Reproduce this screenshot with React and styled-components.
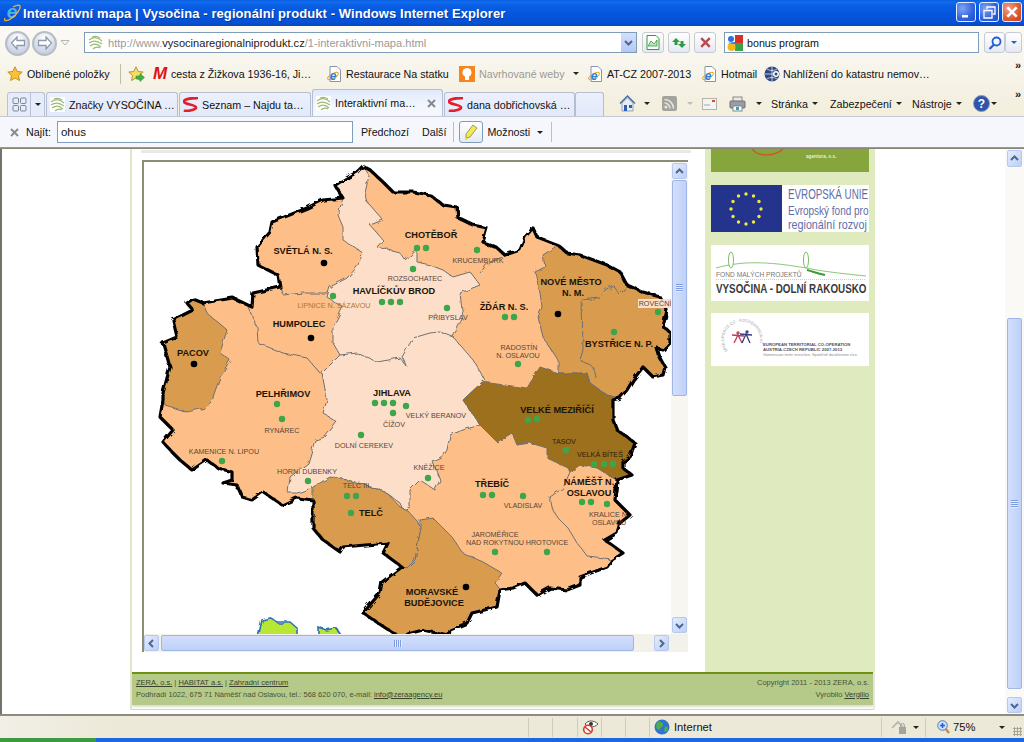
import React from 'react'
import styled, { createGlobalStyle } from 'styled-components'

const GlobalStyle = createGlobalStyle`
    html, body {
        margin: 0;
        padding: 0;
        background: #fff;
        overflow: hidden;
    }
    * { box-sizing: border-box; }
    svg { flex: none; }
`

const Window = styled.div`
    width: 1024px;
    height: 742px;
    display: flex;
    flex-direction: column;
    overflow: hidden;
    font-family: 'Liberation Sans', sans-serif;
    font-size: 10.7px;
    color: #111;
`

const TitleBar = styled.div`
    height: 26px;
    flex: none;
    display: flex;
    align-items: center;
    padding: 0 2px 0 3px;
    background: linear-gradient(180deg, #0a5be0 0%, #0f6dee 8%, #0a5fe4 20%, #0655dc 55%, #0551d8 85%, #0a49b8 100%);
`

const TitleText = styled.span`
    margin-left: 2px;
    color: #fff;
    font-weight: 700;
    font-size: 13px;
    letter-spacing: 0.08px;
    text-shadow: 1px 1px 0 #0a3a9c;
    white-space: nowrap;
`

const WinButtons = styled.div`
    margin-left: auto;
    display: flex;
    gap: 3px;
    padding-bottom: 2px;
`

const WinButton = styled.div`
    width: 20px;
    height: 20px;
    border: 1px solid #e8eefc;
    border-radius: 3px;
    display: flex;
    align-items: center;
    justify-content: center;
    background: ${p => p.$close
        ? 'radial-gradient(circle at 30% 30%, #f0a088, #dd5a30 60%, #c43c18)'
        : 'radial-gradient(circle at 30% 30%, #7ea4f4, #2f62e0 60%, #1f50cc)'};
`

const Toolbars = styled.div`
    flex: none;
    background: linear-gradient(180deg, #fbfaf5 0%, #f8f6ee 35%, #f5f1e4 70%, #f3efdc 100%);
`

const AddressRow = styled.div`
    height: 31px;
    display: flex;
    align-items: flex-start;
    padding: 6px 2px 0 5px;
`

const NavGroup = styled.div`
    width: 79px;
    height: 26px;
    margin-top: -2px;
    display: flex;
    align-items: center;
    gap: 2px;
`

const NavCircle = styled.div`
    width: 25px;
    height: 25px;
    border-radius: 50%;
    border: 2px solid #b8bcc4;
    background: radial-gradient(circle at 50% 25%, #ffffff, #d4dceb 60%, #b6c4dc);
    display: flex;
    align-items: center;
    justify-content: center;
`

const InputBox = styled.div`
    height: 21px;
    width: ${p => p.$w}px;
    margin-left: ${p => p.$ml || 0}px;
    flex: none;
    border: 1px solid #7f9db9;
    background: #fff;
    display: flex;
    align-items: center;
    padding-left: ${p => p.$pad || 3}px;
    white-space: nowrap;
    position: relative;
`

const UrlText = styled.span`
    margin-left: 5px;
    font-size: 11.1px;
`

const UrlHost = styled.span`
    color: #222;
`

const UrlDim = styled.span`
    color: #9a9a9a;
`

const UrlDrop = styled.div`
    margin-left: auto;
    width: 15px;
    height: 19px;
    background: linear-gradient(180deg, #d4e0fb, #b4c8f6);
    display: flex;
    align-items: center;
    justify-content: center;
`

const SearchText = styled.span`
    margin-left: 4px;
`

const ToolButton = styled.div`
    width: ${p => p.$w || 22}px;
    height: 21px;
    flex: none;
    margin-left: ${p => p.$ml || 0}px;
    border: 1px solid #c6cbd6;
    border-radius: 3px;
    background: linear-gradient(180deg, #ffffff, #e6e9f2);
    display: flex;
    align-items: center;
    justify-content: center;
`

const FavRow = styled.div`
    height: 33px;
    display: flex;
    align-items: center;
    padding: 0 0 0 7px;
    position: relative;
`

const FavItem = styled.div`
    width: ${p => p.$w}px;
    flex: none;
    display: flex;
    align-items: center;
    gap: ${p => p.$gap || 4}px;
    white-space: nowrap;
    color: ${p => (p.$dim ? '#9b9b94' : '#111')};
`

const FavSeparator = styled.div`
    width: 8px;
    height: 20px;
    flex: none;
    border-left: 1px solid #c3bca4;
`

const More = styled.span`
    position: absolute;
    right: 3px;
    top: ${p => p.$top}px;
    font-size: 11px;
    font-weight: 700;
    line-height: 10px;
    color: #222;
`

const TabRow = styled.div`
    height: 26px;
    display: flex;
    align-items: flex-end;
    padding-left: 7px;
    position: relative;
`

const QuickTabs = styled.div`
    width: 38px;
    height: 24px;
    margin-right: 1px;
    border: 1px solid #b9c2d6;
    border-bottom: none;
    border-radius: 3px 3px 0 0;
    background: #e6ecfa;
    display: flex;
    align-items: center;
`

const QuickCell = styled.div`
    width: ${p => p.$w}px;
    height: 100%;
    display: flex;
    align-items: center;
    justify-content: center;
    border-right: ${p => (p.$line ? '1px solid #b9c2d6' : 'none')};
`

const Tab = styled.div`
    width: ${p => p.$w || 132}px;
    height: ${p => (p.$active ? 27 : 24)}px;
    flex: none;
    margin-right: ${p => (p.$last ? 0 : 1)}px;
    padding: 0 3px;
    display: flex;
    align-items: center;
    gap: 4px;
    border: 1px solid #b4bed2;
    border-bottom: none;
    border-radius: 3px 3px 0 0;
    background: ${p => (p.$active
        ? 'linear-gradient(180deg, #dfe8fb, #f3f6fe 60%, #f6f7fd)'
        : 'linear-gradient(180deg, #ecf0fc, #e2e9fa)')};
    white-space: nowrap;
    color: #111;
`

const TabClose = styled.span`
    margin-left: auto;
    padding-right: 3px;
    display: flex;
    align-items: center;
`

const CommandBar = styled.div`
    margin-left: 15px;
    height: 25px;
    display: flex;
    align-items: center;
`

const Cmd = styled.div`
    width: ${p => p.$w}px;
    flex: none;
    display: flex;
    align-items: center;
    gap: ${p => p.$gap || 4}px;
    white-space: nowrap;
`

const Caret = styled.span`
    width: 0;
    height: 0;
    flex: none;
    margin-left: ${p => p.$ml || 0}px;
    border-left: 3px solid transparent;
    border-right: 3px solid transparent;
    border-top: 3px solid ${p => (p.$dim ? '#bdbdb4' : p.$color || '#222')};
`

const FindBar = styled.div`
    height: 31px;
    flex: none;
    display: flex;
    align-items: center;
    padding-left: 10px;
    background: #f6f6fd;
    border-top: 1px solid #c4c9d8;
`

const FindLabel = styled.span`
    margin-left: ${p => p.$ml}px;
    white-space: nowrap;
`

const FindInput = styled(InputBox)`
    height: 22px;
    font-size: 11.5px;
`

const FindSeparator = styled.div`
    width: 1px;
    height: 20px;
    flex: none;
    margin-left: ${p => p.$ml}px;
    background: #c7c0a8;
`

const HighlightButton = styled(ToolButton)`
    height: 22px;
    border-color: #7f9db9;
    border-radius: 3px;
`

const Divider = styled.div`
    height: 2px;
    flex: none;
    background: linear-gradient(180deg, #a5a294, #7f7c6e);
`

const Viewport = styled.div`
    height: 565px;
    flex: none;
    display: flex;
    background: #fff;
    border-left: 2px solid #75736a;
    overflow: hidden;
`

const PageArea = styled.div`
    width: 1003px;
    flex: none;
    padding-left: 128px;
`

const Sheet = styled.div`
    width: 745px;
    border-left: 2px solid #dfe5cb;
    border-right: 2px solid #e9e9e2;
    display: flex;
    flex-direction: column;
`

const SheetBody = styled.div`
    height: 523px;
    display: flex;
`

const MainColumn = styled.div`
    width: 573px;
    flex: none;
    padding: 1px 0 0 10px;
`

const TopStrip = styled.div`
    width: 550px;
    height: 3px;
    margin-left: -1px;
    background: #e8e8e8;
`

const MapFrame = styled.div`
    margin-top: 7px;
    width: 546px;
    height: 492px;
    display: flex;
    flex-direction: column;
    border-top: 2px solid #8d8c78;
    border-left: 2px solid #8d8c78;
    background: #f3f2ea;
`

const MapRow = styled.div`
    height: 472px;
    flex: none;
    display: flex;
`

const MapBox = styled.div`
    width: 527px;
    height: 472px;
    flex: none;
    background: #fff;
    overflow: hidden;
`

const VTrack = styled.div`
    width: ${p => p.$w}px;
    flex: none;
    display: flex;
    flex-direction: column;
    align-items: center;
    justify-content: space-between;
    padding: 1px 0;
    background: #f7f6f0;
`

const VTrackTop = styled.div`
    display: flex;
    flex-direction: column;
`

const HTrack = styled.div`
    height: 18px;
    flex: none;
    display: flex;
    align-items: center;
`

const ScrollButton = styled.div`
    width: ${p => p.$w || 15}px;
    height: ${p => p.$h || 16}px;
    flex: none;
    margin-left: ${p => p.$ml || 0}px;
    margin-top: ${p => p.$mt || 0}px;
    border: 1px solid #b5c8ee;
    border-radius: 2px;
    background: linear-gradient(135deg, #e4ecfd, #bccff8);
    display: flex;
    align-items: center;
    justify-content: center;
`

const VThumb = styled.div`
    width: 15px;
    height: ${p => p.$h}px;
    margin-top: ${p => p.$mt}px;
    flex: none;
    border: 1px solid #9fb6e6;
    border-radius: 2px;
    background: linear-gradient(90deg, #d2defb, #bfd1f9);
    display: flex;
    align-items: center;
    justify-content: center;
`

const HThumb = styled.div`
    width: 473px;
    height: 16px;
    flex: none;
    margin-left: 2px;
    border: 1px solid #9fb6e6;
    border-radius: 2px;
    background: linear-gradient(180deg, #d2defb, #bfd1f9);
    display: flex;
    align-items: center;
    justify-content: center;
`

const Grip = styled.div`
    width: ${p => (p.$vertical ? 7 : 8)}px;
    height: ${p => (p.$vertical ? 8 : 7)}px;
    background: repeating-linear-gradient(
        ${p => (p.$vertical ? '180deg' : '90deg')},
        #7f9be0 0,
        #7f9be0 1px,
        #e6edfd 1px,
        #e6edfd 2px
    );
`

const SideColumn = styled.div`
    width: 170px;
    flex: none;
    padding-left: 6px;
    display: flex;
    flex-direction: column;
    background: #dfeabf;
`

const Logo = styled.svg`
    display: block;
    width: 158px;
    height: ${p => p.$h}px;
    margin-bottom: ${p => p.$mb}px;
    flex: none;
    background: ${p => p.$bg || '#fff'};
`

const Footer = styled.div`
    height: 33px;
    flex: none;
    display: flex;
    justify-content: space-between;
    padding: 3px 4px 0 4px;
    background: #b5ca88;
    border-top: 2px solid #6f9212;
    box-shadow: 0 2px 2px #dcdcd2;
    font-size: 7.5px;
    line-height: 11.5px;
    color: #4a5236;
`

const FooterRight = styled.div`
    text-align: right;
`

const FooterLink = styled.span`
    text-decoration: underline;
    color: #38432a;
`

const SheetEnd = styled.div`
    height: 1px;
    margin-top: 4px;
    background: #cdd8a6;
`

const PageScroll = styled.div`
    width: 19px;
    flex: none;
    display: flex;
    flex-direction: column;
    align-items: center;
    padding-top: 1px;
    background: #fbf9f5;
`

const StatusBar = styled.div`
    height: 24px;
    flex: none;
    display: flex;
    align-items: center;
    padding-left: 528px;
    border-top: 2px solid #8e8c80;
    background: linear-gradient(90deg, #f1efe6 0, #ece9d8 120px);
    position: relative;
    font-size: 11.2px;
`

const StatusCell = styled.div`
    width: ${p => p.$w}px;
    height: 19px;
    flex: none;
    display: flex;
    align-items: center;
    gap: ${p => p.$gap || 4}px;
    padding-left: ${p => p.$pad || 0}px;
    border-left: 1px solid #cfccb8;
`

const GripCorner = styled.div`
    position: absolute;
    right: 2px;
    bottom: 2px;
    width: 9px;
    height: 9px;
    background: radial-gradient(circle, #a8a595 1px, transparent 1.2px) 0 0 / 3px 3px;
`

const Taskbar = styled.div`
    height: 4px;
    flex: none;
    display: flex;
    background: #1c66e0;
`

const StartButton = styled.div`
    width: 96px;
    background: #3f9a3f;
`

const MapTitle = styled.text`
    font-family: 'Liberation Sans', sans-serif;
    font-weight: 700;
    font-size: 9.2px;
    fill: #1c1408;
    text-anchor: middle;
`

const MapSmall = styled.text`
    font-family: 'Liberation Sans', sans-serif;
    font-size: 7.2px;
    fill: ${p => p.$color || '#55463a'};
    text-anchor: middle;
`

const LogoText = styled.text`
    font-family: 'Liberation Sans', sans-serif;
    font-size: ${p => p.$size}px;
    font-weight: ${p => p.$weight || 400};
    fill: ${p => p.$color};
`

// the lettering in the logos is condensed, so it is squeezed horizontally
const Squeezed = ({ x, y, sx = 1, children, ...rest }) => (
    <LogoText transform={`translate(${x} ${y}) scale(${sx} 1)`} {...rest}>{children}</LogoText>
)

const OUTER = `363,166 370,170 383,182 393,192 413,192 430,195 443,205 457,207 458,218 473,225 487,228 483,242 497,248 505,255 520,250
525,237 533,228 537,237 558,245 567,253 580,255 607,265 620,272 627,285 643,292 660,297 667,310 663,327 670,332 670,343 663,350 657,348
660,358 665,367 663,375 653,377 643,367 633,380 627,390 620,398 613,400 613,420 617,430 627,437 635,443 630,457 623,462 623,468 632,475
617,480 615,500 630,515 620,523 617,533 605,540 623,553 612,560 607,567 580,577 580,585 567,590 550,588 537,595 525,583 513,588 500,590
497,607 472,613 467,623 450,630 449,636 423,630 400,636 393,633 363,613 380,593 382,582 402,567 383,553 388,543 343,547 340,552 323,540
313,528 313,500 297,498 282,505 263,492 252,500 242,497 237,485 223,483 232,480 232,472 218,468 207,460 192,470 180,460 172,452 163,442
173,430 160,417 163,400 163,393 170,367 163,343 177,337 173,320 193,310 187,303 193,299 203,303 233,298 252,307 253,293 280,287 278,275
258,265 257,247 270,232 272,222 307,208 323,200 343,198 335,185 357,172`

const PALE = `363,166 369,175 365,193 368,203 383,220 370,225 383,240 377,247 400,253 405,260 417,250 417,262 430,265 443,270 453,277 470,272
480,285 460,293 462,310 463,317 453,337 473,360 485,380 463,400 480,425 463,430 450,435 447,450 442,458 433,462 440,480 435,490 420,480
410,490 410,507 403,510 400,503 387,493 373,487 347,480 333,477 327,483 315,487 297,493 288,493 290,477 308,463 315,440 325,437 337,422
323,413 327,400 322,373 340,355 333,343 333,327 343,307 327,297 330,287 347,278 357,267 363,253 343,240 343,227 338,215 343,198 335,185 357,172`

const PACOV = `203,303 207,313 227,330 220,353 230,360 220,377 213,397 213,400 205,408 187,412 165,405 163,400 163,393 170,367 163,343 177,337
173,320 193,310 187,303 193,299`

const TELC = `313,487 330,477 347,480 373,487 387,493 400,507 407,510 418,522 420,533 415,560 407,568 402,567 383,553 388,543 343,547 340,552
323,540 313,528 313,500`

const BUDEJOVICE = `420,520 433,518 452,537 463,553 483,562 502,573 495,583 500,590 497,607 472,613 467,623 450,630 449,636 423,630 400,636
393,633 363,613 380,593 382,582 402,567 407,568 415,560 420,533`

const MESTO = `558,245 543,255 545,267 535,272 540,293 542,307 538,317 543,337 558,360 558,373 587,373 590,383 607,395 620,398 627,390 633,380
643,367 653,377 663,375 665,367 660,358 657,348 663,350 670,343 670,332 663,327 667,310 660,297 643,292 627,285 620,272 607,265 580,255 567,253`

const MEZIRICI = `463,400 482,382 527,388 540,367 558,373 587,373 590,383 607,395 620,398 613,400 613,420 617,430 627,437 635,443 630,457 623,462
623,468 632,475 617,480 613,478 597,468 580,465 570,472 568,468 547,458 547,448 530,443 517,445 512,433 497,442 480,425`

const INNER_LINES = [
    '340,355 357,353 377,362 400,358 407,367 402,357 413,338 430,333 440,332 453,337',
    '480,273 488,263 507,255',
    '248,307 257,327 258,343 283,353 307,358 320,373',
    '280,287 283,295 303,293 328,293',
    '570,472 563,488 550,497 552,507 557,517 568,528 577,543 588,557 597,558 612,560',
    '627,285 620,295 613,285 605,290 600,298 582,300 583,350 580,360 593,367 595,377',
]

const TITLES = [
    ['SVĚTLÁ N. S.', 303, 254],
    ['CHOTĚBOŘ', 431, 238],
    ['HAVLÍČKŮV BROD', 394, 294],
    ['ŽĎÁR N. S.', 504, 310],
    ['NOVÉ MĚSTO', 571, 285],
    ['N. M.', 573, 296],
    ['BYSTŘICE N. P.', 619, 347],
    ['HUMPOLEC', 299, 327],
    ['PACOV', 193, 356],
    ['PELHŘIMOV', 283, 397],
    ['JIHLAVA', 392, 396],
    ['VELKÉ MEZIŘÍČÍ', 557, 413],
    ['TŘEBÍČ', 492, 487],
    ['NÁMĚŠŤ N.', 589, 485],
    ['OSLAVOU', 589, 496],
    ['TELČ', 371, 516],
    ['MORAVSKÉ', 432, 595],
    ['BUDĚJOVICE', 434, 606],
]

const PLACES = [
    ['ROZSOCHATEC', 415, 281],
    ['KRUCEMBURK', 478, 263],
    ['PŘIBYSLAV', 448, 320],
    ['RADOSTÍN', 519, 350],
    ['N. OSLAVOU', 518, 358],
    ['KAMENICE N. LIPOU', 224, 454],
    ['RYNÁREC', 282, 433],
    ['ČÍŽOV', 394, 427],
    ['VELKÝ BERANOV', 436, 418],
    ['DOLNÍ CEREKEV', 364, 448],
    ['HORNÍ DUBENKY', 307, 474],
    ['TELČ III.', 357, 488],
    ['KNĚŽICE', 429, 470],
    ['VLADISLAV', 523, 508],
    ['KRALICE N.', 609, 517],
    ['OSLAVOU', 609, 525],
    ['JAROMĚŘICE', 495, 537],
    ['NAD ROKYTNOU', 495, 545],
    ['HROTOVICE', 547, 545],
]

const GREEN_DOTS = [
    [417, 248], [426, 248], [413, 269], [333, 296], [382, 302], [391, 302], [400, 302], [477, 250], [447, 308],
    [505, 317], [514, 317], [518, 364], [658, 312], [614, 332], [277, 404], [282, 419], [222, 461], [308, 481],
    [347, 496], [356, 496], [351, 513], [361, 435], [393, 413], [375, 403], [384, 403], [393, 403], [406, 406],
    [428, 478], [528, 420], [537, 419], [566, 450], [594, 464], [604, 464], [613, 464], [582, 502], [591, 502],
    [607, 504], [483, 495], [492, 495], [523, 496], [495, 552], [547, 552],
]

const BLACK_DOTS = [[324, 263], [311, 338], [194, 364], [558, 314], [466, 587]]

const RegionMap = () => (
    <svg width="527" height="472" viewBox="144 162 527 472">
        <defs>
            {/* the borders in the scan wobble, straight polygons look too clean */}
            <filter id="wobble" x="-5%" y="-5%" width="110%" height="110%">
                <feTurbulence type="fractalNoise" baseFrequency="0.13" numOctaves="2" seed="4" result="noise" />
                <feDisplacementMap in="SourceGraphic" in2="noise" scale="5" result="moved" />
                <feGaussianBlur in="moved" stdDeviation="0.45" />
            </filter>
        </defs>
        <g filter="url(#wobble)">
            <polygon points="258,638 262,620 270,618 277,622 290,622 297,628 297,638" fill="#b7e733" stroke="#2f6fb8" strokeWidth="1.6" />
            <polygon points="318,638 318,627 326,630 336,628 343,638" fill="#b7e733" stroke="#2f6fb8" strokeWidth="1.6" />
            <polygon points={OUTER} fill="#fdbf87" />
            <polygon points={PALE} fill="#fddfc9" stroke="#6f6f6f" />
            <polygon points={PACOV} fill="#d99c50" stroke="#6f6f6f" />
            <polygon points={TELC} fill="#d99c50" stroke="#6f6f6f" />
            <polygon points={BUDEJOVICE} fill="#d99c50" stroke="#6f6f6f" />
            <polygon points={MESTO} fill="#d99c50" stroke="#6f6f6f" />
            <polygon points={MEZIRICI} fill="#9c6f1a" stroke="#6f6f6f" />
            {INNER_LINES.map(line => (
                <polyline key={line} points={line} fill="none" stroke="#6f6f6f" />
            ))}
            <polygon points={OUTER} fill="none" stroke="#000" strokeWidth="3.2" strokeLinejoin="round" />
        </g>
        <rect x="638" y="299" width="33" height="9" fill="#fddfc9" />
        {TITLES.map(([text, x, y]) => (
            <MapTitle key={text + y} x={x} y={y}>{text}</MapTitle>
        ))}
        {PLACES.map(([text, x, y]) => (
            <MapSmall key={text + y} x={x} y={y}>{text}</MapSmall>
        ))}
        <MapSmall x="564" y="444" $color="#2e2010">TASOV</MapSmall>
        <MapSmall x="600" y="457" $color="#2e2010">VELKÁ BÍTEŠ</MapSmall>
        <MapSmall x="334" y="308" $color="#b0782a">LIPNICE N. SÁZAVOU</MapSmall>
        <MapSmall x="655" y="306">ROVEČNÍ</MapSmall>
        {GREEN_DOTS.map(([x, y]) => (
            <circle key={`${x}-${y}`} cx={x} cy={y} r="3.2" fill="#3da64a" />
        ))}
        {BLACK_DOTS.map(([x, y]) => (
            <circle key={`${x}-${y}`} cx={x} cy={y} r="3.3" fill="#000" />
        ))}
    </svg>
)

// small drawn icons for the browser chrome
const IeLogo = () => (
    <svg width="18" height="18" viewBox="0 0 18 18" overflow="visible">
        <text x="9" y="14" textAnchor="middle" fontFamily="Liberation Sans, sans-serif" fontWeight="700" fontStyle="italic" fontSize="19" fill="#4fb0f0">e</text>
        <path d="M2 14C0 18 5 17 9 14s9-9 8-12c-1-2-5 0-7 1" fill="none" stroke="#f2b233" strokeWidth="1.300" />
    </svg>
)

const IePage = () => (
    <svg width="15" height="16" viewBox="0 0 15 16">
        <path d="M3 .5h7l3.500 3.500v11.500H3z" fill="#fff" stroke="#8a94a8" />
        <ellipse cx="6" cy="10" rx="6" ry="2.200" fill="none" stroke="#f0a020" transform="rotate(-30 6 10)" />
        <text x="6" y="14" textAnchor="middle" fontFamily="Liberation Sans, sans-serif" fontWeight="700" fontStyle="italic" fontSize="12" fill="#2a7fd8">e</text>
    </svg>
)

const SiteIcon = () => (
    <svg width="15" height="15" viewBox="0 0 15 15">
        <rect width="15" height="15" fill="#fff" />
        <g fill="none" stroke="#9cbb74" strokeWidth="1.200">
            <path d="M1 5c4-3 9-3 13 1" />
            <path d="M1 8c4-3 9-2 13 1" />
            <path d="M2 11c4-3 8-2 11 1" />
            <path d="M5 14c2-2 5-2 7-1" />
            <path d="M4 2c3-1 5-1 8 1" />
        </g>
    </svg>
)

const SeznamIcon = () => (
    <svg width="15" height="15" viewBox="0 0 15 15">
        <path d="M14 1C8 1 1 2 1 4.500c0 3 12 3 12 6 0 2-6 3.500-11 3.500" fill="none" stroke="#e2202c" strokeWidth="2.800" strokeLinecap="round" />
    </svg>
)

const FavStar = () => (
    <svg width="16" height="16" viewBox="0 0 16 16">
        <path d="M8 .8l2.200 4.700 5 .6-3.700 3.400 1 5-4.500-2.500-4.500 2.500 1-5L.8 6.100l5-.6z" fill="#f8c33a" stroke="#cf8d18" />
    </svg>
)

const AddStar = () => (
    <svg width="17" height="16" viewBox="0 0 17 16">
        <path d="M8 .8l2.200 4.700 5 .6-3.700 3.400 1 5-4.500-2.500-4.500 2.500 1-5L.8 6.100l5-.6z" fill="#f8dc6a" stroke="#b8982a" />
        <path d="M8 10h4V7.500l4.500 4-4.500 4V13H8z" fill="#44b044" stroke="#2a8a2a" strokeWidth=".5" />
    </svg>
)

const GmailMark = styled.span`
    width: 14px;
    flex: none;
    font-weight: 700;
    font-style: italic;
    font-size: 17px;
    line-height: 14px;
    color: #e01218;
`

const Bulb = () => (
    <svg width="16" height="16" viewBox="0 0 16 16">
        <rect width="16" height="16" fill="#f7851c" />
        <circle cx="8" cy="6.500" r="4.500" fill="#fff" />
        <rect x="6" y="10" width="4" height="4" fill="#fff" />
    </svg>
)

const GlobeBadge = () => (
    <svg width="16" height="16" viewBox="0 0 16 16">
        <circle cx="8" cy="8" r="7.500" fill="#2f4a80" />
        <path d="M8 .5v15M1 8h14M3 3c3 2 7 2 10 0M3 13c3-2 7-2 10 0" stroke="#fff" strokeWidth=".7" fill="none" />
        <circle cx="12" cy="8" r="3" fill="#fff" />
        <circle cx="12" cy="8" r="1.500" fill="#2f4a80" />
    </svg>
)

const Arrow = ({ flip }) => (
    <svg width="16" height="14" viewBox="0 0 16 14" style={flip ? { transform: 'scaleX(-1)' } : undefined}>
        <path d="M7 1L1.500 7 7 13V9.500h7.500v-5H7z" fill="#fff" stroke="#8f99ac" strokeWidth="1.300" />
    </svg>
)

const Chevron = ({ dir = 'up', color = '#4a6890', size = 9 }) => {
    const paths = {
        up: 'M1 6l3.500-3.500L8 6',
        down: 'M1 3l3.500 3.500L8 3',
        left: 'M6 1L2.500 4.500 6 8',
        right: 'M3 1l3.500 3.500L3 8',
    }
    return (
        <svg width={size} height={size} viewBox="0 0 9 9">
            <path d={paths[dir]} fill="none" stroke={color} strokeWidth="2" />
        </svg>
    )
}

const Cross = ({ color = '#8a8a8a', size = 9 }) => (
    <svg width={size} height={size} viewBox="0 0 9 9">
        <path d="M1 1l7 7M8 1L1 8" stroke={color} strokeWidth="2" />
    </svg>
)

const HelpIcon = () => (
    <svg width="17" height="17" viewBox="0 0 17 17">
        <circle cx="8.500" cy="8.500" r="8" fill="#2f55a8" stroke="#8a9ac0" />
        <text x="8.500" y="13" textAnchor="middle" fontFamily="Liberation Sans, sans-serif" fontWeight="700" fontSize="12" fill="#fff">?</text>
    </svg>
)

const App = () => (
    <Window>
        <GlobalStyle />
        <TitleBar>
            <IeLogo />
            <TitleText>Interaktivní mapa | Vysočina - regionální produkt - Windows Internet Explorer</TitleText>
            <WinButtons>
                <WinButton>
                    <svg width="12" height="12" viewBox="0 0 12 12"><rect x="2" y="9" width="6" height="2.500" fill="#fff" /></svg>
                </WinButton>
                <WinButton>
                    <svg width="13" height="13" viewBox="0 0 13 13">
                        <path d="M4 3V1h8v7h-2M1 4.500h8V12H1z" fill="none" stroke="#fff" strokeWidth="1.300" />
                    </svg>
                </WinButton>
                <WinButton $close>
                    <Cross color="#fff" size={12} />
                </WinButton>
            </WinButtons>
        </TitleBar>

        <Toolbars>
            <AddressRow>
                <NavGroup>
                    <NavCircle><Arrow /></NavCircle>
                    <NavCircle><Arrow flip /></NavCircle>
                    <svg width="12" height="8" viewBox="0 0 12 8">
                        <path d="M2 1.500h8L6 6z" fill="none" stroke="#b6b6b0" />
                    </svg>
                </NavGroup>
                <InputBox $w={553}>
                    <SiteIcon />
                    <UrlText>
                        <UrlDim>http://www.</UrlDim><UrlHost>vysocinaregionalniprodukt.cz</UrlHost><UrlDim>/1-interaktivni-mapa.html</UrlDim>
                    </UrlText>
                    <UrlDrop><Chevron dir="down" /></UrlDrop>
                </InputBox>
                <ToolButton $ml={5}>
                    <svg width="14" height="15" viewBox="0 0 14 15">
                        <path d="M1 .5h9l3 3v11H1z" fill="#fff" stroke="#2f9a3f" />
                        <path d="M2 11l3-5 3 3 3-4v6z" fill="#bfe6bf" stroke="#2f9a3f" strokeWidth=".8" />
                    </svg>
                </ToolButton>
                <ToolButton $ml={4}>
                    <svg width="16" height="14" viewBox="0 0 16 14">
                        <path d="M1 6l4-4 4 4H6.500v3h-3V6zM15 8l-4 4-4-4h2.500V5h3v3z" fill="#2f9a3f" />
                    </svg>
                </ToolButton>
                <ToolButton $ml={4}><Cross color="#b84c4c" size={11} /></ToolButton>
                <InputBox $w={255} $pad={2} $ml={8}>
                    <svg width="16" height="16" viewBox="0 0 16 16">
                        <circle cx="4" cy="4" r="3" fill="#2f6fd8" />
                        <path d="M8 0h8v8H8z" fill="#d8302a" />
                        <path d="M8 8h8v8H8z" fill="#3aa04a" />
                        <circle cx="4.500" cy="12" r="4" fill="#f0b820" />
                        <path d="M0 8l8-1v2z" fill="#2f6fd8" />
                    </svg>
                    <SearchText>bonus program</SearchText>
                </InputBox>
                <ToolButton $ml={5} $w={21}>
                    <svg width="14" height="14" viewBox="0 0 14 14">
                        <circle cx="8.500" cy="5.500" r="4" fill="none" stroke="#1f5fd0" strokeWidth="1.800" />
                        <path d="M6 8.500L1.500 13" stroke="#1f5fd0" strokeWidth="2.200" />
                    </svg>
                </ToolButton>
                <ToolButton $w={17}>
                    <Caret $color="#1f5fd0" />
                </ToolButton>
            </AddressRow>

            <FavRow>
                <FavItem $w={113}><FavStar />Oblíbené položky</FavItem>
                <FavSeparator />
                <FavItem $w={25}><AddStar /></FavItem>
                <FavItem $w={174}><GmailMark>M</GmailMark>cesta z Žižkova 1936-16, Ji…</FavItem>
                <FavItem $w={132}><IePage />Restaurace Na statku</FavItem>
                <FavItem $w={129} $dim><Bulb />Navrhované weby<Caret $ml={4} /></FavItem>
                <FavItem $w={114}><IePage />AT-CZ 2007-2013</FavItem>
                <FavItem $w={62}><IePage />Hotmail</FavItem>
                <FavItem $w={200} $gap={3}><GlobeBadge />Nahlížení do katastru nemov…</FavItem>
                <More $top={3}>»</More>
            </FavRow>

            <TabRow>
                <QuickTabs>
                    <QuickCell $w={24} $line>
                        <svg width="15" height="15" viewBox="0 0 15 15">
                            <g fill="none" stroke="#7d8794">
                                <rect x="1" y="1" width="5.500" height="5.500" rx="1" />
                                <rect x="8.500" y="1" width="5.500" height="5.500" rx="1" />
                                <rect x="1" y="8.500" width="5.500" height="5.500" rx="1" />
                                <rect x="8.500" y="8.500" width="5.500" height="5.500" rx="1" />
                            </g>
                        </svg>
                    </QuickCell>
                    <QuickCell $w={13}><Caret /></QuickCell>
                </QuickTabs>
                <Tab><SiteIcon />Značky VYSOČINA …</Tab>
                <Tab><SeznamIcon />Seznam – Najdu ta…</Tab>
                <Tab $w={131} $active><SiteIcon />Interaktivní ma…<TabClose><Cross /></TabClose></Tab>
                <Tab $w={131} $last><SeznamIcon />dana dobřichovská …</Tab>
                <Tab $w={29} $last />
                <CommandBar>
                    <Cmd $w={43} $gap={8}>
                        <svg width="17" height="17" viewBox="0 0 17 17">
                            <path d="M1 8.500L8.500 1 16 8.500" fill="none" stroke="#4f6fa8" strokeWidth="1.500" />
                            <path d="M3 8v8h11V8L8.500 3z" fill="#e8ecf4" stroke="#7f8fae" strokeWidth=".8" />
                            <rect x="5" y="10" width="3" height="6" fill="#2f5fb0" />
                            <rect x="10" y="10" width="3" height="3" fill="#2f5fb0" />
                        </svg>
                        <Caret />
                    </Cmd>
                    <Cmd $w={40} $gap={10}>
                        <svg width="15" height="15" viewBox="0 0 15 15">
                            <rect width="15" height="15" rx="2" fill="#a4a49c" />
                            <circle cx="4" cy="11" r="1.600" fill="#e4e4de" />
                            <path d="M2.500 7a5.500 5.500 0 015.500 5.500M2.500 3.500a9 9 0 019 9" fill="none" stroke="#e4e4de" strokeWidth="1.500" />
                        </svg>
                        <Caret $dim />
                    </Cmd>
                    <Cmd $w={27}>
                        <svg width="15" height="12" viewBox="0 0 15 12">
                            <rect x=".5" y=".5" width="14" height="11" fill="#f4f4f2" stroke="#b4b4ae" />
                            <rect x="10" y="2" width="3" height="2" fill="#d84a3a" />
                            <path d="M2 7h6" stroke="#a4a4a0" />
                        </svg>
                    </Cmd>
                    <Cmd $w={42} $gap={10}>
                        <svg width="17" height="16" viewBox="0 0 17 16">
                            <rect x="4" y="1" width="9" height="5" fill="#e8e8e8" stroke="#8a8a8a" />
                            <rect x="1" y="5" width="15" height="7" rx="1" fill="#9a9ea4" stroke="#6a6e74" />
                            <rect x="4" y="10" width="9" height="5" fill="#fff" stroke="#7a8a9a" />
                            <rect x="7" y="11" width="3" height="3" fill="#3aa0c0" />
                        </svg>
                        <Caret />
                    </Cmd>
                    <Cmd $w={59}>Stránka<Caret /></Cmd>
                    <Cmd $w={82}>Zabezpečení<Caret /></Cmd>
                    <Cmd $w={61}>Nástroje<Caret /></Cmd>
                    <Cmd $w={30} $gap={1}><HelpIcon /><Caret /></Cmd>
                </CommandBar>
                <More $top={-1}>»</More>
            </TabRow>
        </Toolbars>

        <FindBar>
            <Cross />
            <FindLabel $ml={7}>Najít:</FindLabel>
            <FindInput $w={296} $ml={6}>ohus</FindInput>
            <FindLabel $ml={8}>Předchozí</FindLabel>
            <FindLabel $ml={13}>Další</FindLabel>
            <FindSeparator $ml={7} />
            <HighlightButton $ml={5} $w={24}>
                <svg width="14" height="17" viewBox="0 0 14 17">
                    <path d="M9 1l4 3-7 9-4 1 0-4z" fill="#f2e85a" stroke="#8a8a3a" strokeWidth=".8" />
                    <path d="M2 13l-1 3 3-1z" fill="#e8d020" />
                </svg>
            </HighlightButton>
            <FindLabel $ml={4}>Možnosti</FindLabel>
            <Caret $ml={7} />
            <FindSeparator $ml={8} />
        </FindBar>
        <Divider />

        <Viewport>
            <PageArea>
                <Sheet>
                    <SheetBody>
                        <MainColumn>
                            <TopStrip />
                            <MapFrame>
                                <MapRow>
                                    <MapBox><RegionMap /></MapBox>
                                    <VTrack $w={17}>
                                        <VTrackTop>
                                            <ScrollButton><Chevron dir="up" /></ScrollButton>
                                            <VThumb $h={216} $mt={1}><Grip $vertical /></VThumb>
                                        </VTrackTop>
                                        <ScrollButton><Chevron dir="down" /></ScrollButton>
                                    </VTrack>
                                </MapRow>
                                <HTrack>
                                    <ScrollButton><Chevron dir="left" /></ScrollButton>
                                    <HThumb><Grip /></HThumb>
                                    <ScrollButton $ml={20}><Chevron dir="right" /></ScrollButton>
                                </HTrack>
                            </MapFrame>
                        </MainColumn>
                        <SideColumn>
                            <Logo $h={23} $mb={13} $bg="#86a53c" viewBox="0 0 158 23">
                                <path d="M41 0c6 8 22 8 31 0" fill="none" stroke="#d84a2a" strokeWidth="1.200" />
                                <Squeezed x="95" y="9" sx="0.78" $size={6} $weight={700} $color="#e8f0d0">agentura, o.s.</Squeezed>
                            </Logo>
                            <Logo $h={47} $mb={13} viewBox="0 0 158 47">
                                <rect width="71" height="47" fill="#24348c" />
                                {Array.from({ length: 12 }, (_, i) => {
                                    const a = (i * Math.PI) / 6
                                    return (
                                        <circle key={i} cx={35 + 15 * Math.sin(a)} cy={24 - 15 * Math.cos(a)} r="1.700" fill="#f4e83a" />
                                    )
                                })}
                                <Squeezed x="77" y="14" sx="0.7" $size={14} $color="#5f6ea8">EVROPSKÁ UNIE</Squeezed>
                                <Squeezed x="77" y="30" sx="0.8" $size={12.500} $color="#5f6ea8">Evropský fond pro</Squeezed>
                                <Squeezed x="77" y="44" sx="0.86" $size={12.500} $color="#5f6ea8">regionální rozvoj</Squeezed>
                            </Logo>
                            <Logo $h={56} $mb={12} viewBox="0 0 158 56">
                                <path d="M5 23c25-7 50-7 90 0 20 4 40 6 60 8" fill="none" stroke="#8cc87a" strokeWidth="1" />
                                <path d="M96 25c4 1 10 3 18 5" fill="none" stroke="#3a9a3a" strokeWidth="2" />
                                <ellipse cx="20" cy="15" rx="2.500" ry="8" fill="#fff" stroke="#7cbc6a" />
                                <ellipse cx="95" cy="15" rx="2.500" ry="8" fill="#fff" stroke="#7cbc6a" />
                                <Squeezed x="5" y="32" sx="0.83" $size={8} $color="#777">FOND MALÝCH PROJEKTŮ</Squeezed>
                                <path d="M5 34.500h150" stroke="#ccc" strokeDasharray="1 1" />
                                <Squeezed x="5" y="48" sx="0.82" $size={12} $weight={700} $color="#3a3a3a">VYSOČINA - DOLNÍ RAKOUSKO</Squeezed>
                            </Logo>
                            <Logo $h={53} $mb={0} viewBox="0 0 158 53">
                                <defs>
                                    <path id="ringText" d="M17 38a18 18 0 1 1 28 0" />
                                </defs>
                                <LogoText $size={4} $color="#a89aa8"><textPath href="#ringText">SPOLUPRÁCE CZ · KOOPERATION AT</textPath></LogoText>
                                <g fill="none" strokeWidth="1.300" transform="translate(-1 3)">
                                    <path d="M24 27l4-8 4 8M22 19l12 1" stroke="#c03a5a" />
                                    <path d="M32 27l4-9 4 9M30 18l12 1" stroke="#3a3a80" />
                                    <circle cx="28" cy="17" r="1" stroke="#c03a5a" />
                                    <circle cx="37" cy="16" r="1" stroke="#3a3a80" />
                                </g>
                                <Squeezed x="52" y="33" sx="1.12" $size={3.800} $weight={700} $color="#50505a">EUROPEAN TERRITORIAL CO-OPERATION</Squeezed>
                                <Squeezed x="52" y="38" sx="1.12" $size={3.800} $weight={700} $color="#50505a">AUSTRIA-CZECH REPUBLIC 2007-2013</Squeezed>
                                <Squeezed x="52" y="43" sx="1.12" $size={3.400} $color="#8a8a90">Gemeinsam mehr erreichen. Společně dosáhneme více.</Squeezed>
                            </Logo>
                        </SideColumn>
                    </SheetBody>
                    <Footer>
                        <div>
                            <div><FooterLink>ZERA, o.s.</FooterLink> | <FooterLink>HABITAT a.s.</FooterLink> | <FooterLink>Zahradní centrum</FooterLink></div>
                            <div>Podhradí 1022, 675 71 Náměšť nad Oslavou, tel.: 568 620 070, e-mail: <FooterLink>info@zeraagency.eu</FooterLink></div>
                        </div>
                        <FooterRight>
                            <div>Copyright 2011 - 2013 ZERA, o.s.</div>
                            <div>Vyrobilo <FooterLink>Vergilio</FooterLink></div>
                        </FooterRight>
                    </Footer>
                    <SheetEnd />
                </Sheet>
            </PageArea>
            <PageScroll>
                <ScrollButton $h={17}><Chevron dir="up" /></ScrollButton>
                <VThumb $h={371} $mt={151}><Grip $vertical /></VThumb>
                <ScrollButton $h={16} $mt={8}><Chevron dir="down" /></ScrollButton>
            </PageScroll>
        </Viewport>

        <StatusBar>
            <StatusCell $w={24} />
            <StatusCell $w={25} />
            <StatusCell $w={24} $pad={4}>
                <svg width="17" height="16" viewBox="0 0 17 16">
                    <path d="M3 5c3-4 9-4 13 0-4 4-10 4-13 0z" fill="#fff" stroke="#555" />
                    <circle cx="9" cy="5" r="2" fill="#333" />
                    <circle cx="6" cy="10.500" r="4.300" fill="#fff" stroke="#d83a2a" strokeWidth="1.600" />
                    <path d="M3 8l6 5" stroke="#d83a2a" strokeWidth="1.600" />
                </svg>
            </StatusCell>
            <StatusCell $w={24} />
            <StatusCell $w={24} />
            <StatusCell $w={232} $pad={4} $gap={4}>
                <svg width="16" height="16" viewBox="0 0 16 16">
                    <circle cx="8" cy="8" r="7.500" fill="#2f74d0" />
                    <path d="M3 3c3-1 5 0 6 2s-2 3-3 5-3 0-4-2zM11 8c2-1 3 0 3 2s-2 3-3 3-1-3 0-5z" fill="#4fb03f" />
                </svg>
                Internet
            </StatusCell>
            <StatusCell $w={44} $pad={9} $gap={6}>
                <svg width="16" height="16" viewBox="0 0 16 16">
                    <path d="M1 9l6-6 6 6" fill="none" stroke="#b4b4ac" strokeWidth="1.600" />
                    <rect x="8" y="8" width="7" height="7" fill="#a4a49c" />
                    <path d="M9.500 8V6.500a2 2 0 014 0V8" fill="none" stroke="#a4a49c" />
                </svg>
                <Caret />
            </StatusCell>
            <StatusCell $w={99} $pad={11} $gap={3}>
                <svg width="13" height="14" viewBox="0 0 13 14">
                    <path d="M8 8l4 5" stroke="#c08a3a" strokeWidth="2.200" />
                    <circle cx="5.500" cy="5.500" r="4.800" fill="#cfe0f8" stroke="#5a7ab0" />
                    <path d="M5.500 3v5M3 5.500h5" stroke="#1f5fd0" strokeWidth="1.500" />
                </svg>
                75%
                <Caret $ml={21} />
            </StatusCell>
            <GripCorner />
        </StatusBar>
        <Taskbar><StartButton /></Taskbar>
    </Window>
)

export default App
